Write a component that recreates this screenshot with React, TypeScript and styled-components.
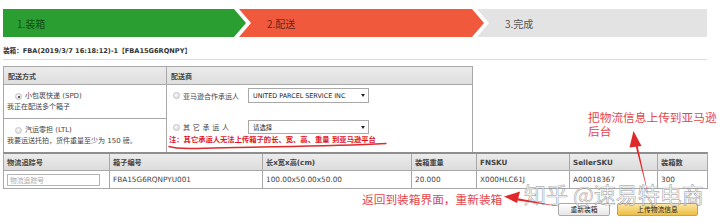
import styled, { createGlobalStyle } from 'styled-components';

const GlobalStyle = createGlobalStyle`
  html, body {
    margin: 0;
    padding: 0;
    background: #fff;
  }
  body {
    font-family: "DejaVu Sans", "Noto Sans CJK SC", sans-serif;
    color: #333;
  }
`;

const Page = styled.div`
  position: relative;
  width: 720px;
  height: 223px;
  overflow: hidden;
  padding: 9px 0 0 3px;
  box-sizing: border-box;
`;

const Steps = styled.div`
  display: flex;
  width: 704px;
  height: 28px;
`;

type StepKind = 'first' | 'middle' | 'last';

const clips: Record<StepKind, string> = {
  first: 'polygon(0 0, calc(100% - 12px) 0, 100% 50%, calc(100% - 12px) 100%, 0 100%)',
  middle:
    'polygon(0 0, calc(100% - 12px) 0, 100% 50%, calc(100% - 12px) 100%, 0 100%, 12px 50%)',
  last: 'polygon(0 0, 100% 0, 100% 100%, 0 100%, 12px 50%)',
};

const Step = styled.div<{ $kind: StepKind; $bg: string; $color: string; $w: number }>`
  flex: none;
  box-sizing: border-box;
  width: ${(p) => p.$w}px;
  margin-left: ${(p) => (p.$kind === 'first' ? 0 : -7)}px;
  padding-left: ${(p) => (p.$kind === 'first' ? 14 : 28)}px;
  display: flex;
  align-items: center;
  background: ${(p) => p.$bg};
  color: ${(p) => p.$color};
  font-family: "Noto Sans CJK SC", sans-serif;
  font-size: 10px;
  clip-path: ${(p) => clips[p.$kind]};
`;

const Title = styled.div`
  width: 704px;
  margin-top: 9px;
  padding-bottom: 3px;
  border-bottom: 1px solid #dcdcdc;
  font-size: 6.6px;
  font-weight: bold;
  line-height: 10px;
  color: #333;
`;

const ShipTable = styled.div`
  display: grid;
  grid-template-columns: 162px 306px;
  grid-template-rows: 17px 34px 34px;
  width: 470px;
  margin-top: 6px;
  border: 1px solid #a8a8a8;
  border-bottom: none;
  box-sizing: border-box;
  font-size: 7px;
`;

const HeadCell = styled.div<{ $divider?: boolean }>`
  display: flex;
  align-items: center;
  padding-left: 4px;
  background: linear-gradient(#ececec, #dedede);
  font-weight: bold;
  color: #444;
  border-left: ${(p) => (p.$divider ? '1px solid #a8a8a8' : 'none')};
`;

const ModeCell = styled.div`
  border-top: 1px solid #a8a8a8;
  padding: 6px 0 0 3px;
  line-height: 11px;
  color: #444;
`;

const CarrierCell = styled.div`
  grid-column: 2;
  grid-row: 2 / span 2;
  border-top: 1px solid #a8a8a8;
  border-left: 1px solid #a8a8a8;
  padding: 3px 0 0 1px;
  display: flex;
  flex-direction: column;
`;

const RadioLine = styled.div<{ $indent?: number }>`
  display: flex;
  align-items: center;
  gap: 3px;
  padding-left: ${(p) => p.$indent ?? 0}px;
  color: #444;
`;

const Radio = styled.span<{ $checked?: boolean }>`
  flex: none;
  position: relative;
  width: 7px;
  height: 7px;
  border-radius: 50%;
  box-sizing: border-box;
  border: 1px solid #c4c4c4;
  background: radial-gradient(circle at 40% 35%, #fafafa, #d6d6d6);
  &::after {
    content: '';
    display: ${(p) => (p.$checked ? 'block' : 'none')};
    position: absolute;
    left: 1.5px;
    top: 1.5px;
    width: 2px;
    height: 2px;
    border-radius: 50%;
    background: #333;
  }
`;

const CarrierRow = styled.div<{ $gapTop: number }>`
  display: grid;
  grid-template-columns: 75px 121px;
  align-items: center;
  margin-top: ${(p) => p.$gapTop}px;
  padding-left: 5px;
`;

const Spaced = styled.span`
  word-spacing: 0.5px;
`;

const Select = styled.div<{ $h: number }>`
  height: ${(p) => p.$h}px;
  box-sizing: border-box;
  border: 1px solid #a9a9a9;
  background: #fff;
  display: flex;
  align-items: center;
  justify-content: space-between;
  padding: 0 3px 0 4px;
  font-size: 6.4px;
  color: #222;
  &::after {
    content: '';
    border-left: 2px solid transparent;
    border-right: 2px solid transparent;
    border-top: 3px solid #222;
  }
`;

const Note = styled.div`
  margin-top: 1px;
  padding-left: 1px;
  color: #e0141e;
  font-weight: bold;
  font-size: 7.3px;
  line-height: 10px;
  white-space: nowrap;
`;

const BoxTable = styled.div`
  display: grid;
  grid-template-columns: 105px 153px 149px 65px 93px 88px 50px;
  grid-template-rows: 16px 18px;
  width: 705px;
  border: 1px solid #a8a8a8;
  border-top: 2px solid #8e8e8e;
  box-sizing: border-box;
`;

const Th = styled.div<{ $first?: boolean }>`
  display: flex;
  align-items: center;
  padding-left: 3px;
  background: linear-gradient(#ececec, #dcdcdc);
  border-left: ${(p) => (p.$first ? 'none' : '1px solid #a8a8a8')};
  font-size: 7.2px;
  font-weight: bold;
  color: #444;
`;

const Td = styled.div<{ $first?: boolean }>`
  display: flex;
  align-items: center;
  padding-left: 3px;
  border-top: 1px solid #a8a8a8;
  border-left: ${(p) => (p.$first ? 'none' : '1px solid #a8a8a8')};
  font-size: 7.3px;
  color: #444;
`;

const TrackInput = styled.input`
  width: 93px;
  height: 12px;
  box-sizing: border-box;
  margin: 0;
  padding: 0 2px;
  border: 1px solid #b4b4b4;
  font-family: "Noto Sans CJK SC", sans-serif;
  font-size: 6.8px;
  outline: none;
  &::placeholder {
    color: #aaa;
  }
`;

const Actions = styled.div`
  display: flex;
  justify-content: flex-end;
  gap: 7px;
  width: 695px;
  margin-top: 14px;
`;

const Button = styled.button<{ $primary?: boolean }>`
  height: 13px;
  width: ${(p) => (p.$primary ? 81 : 52)}px;
  padding: 0;
  border-radius: 2px;
  border: 1px solid ${(p) => (p.$primary ? '#c9a23c' : '#aaa')};
  background: ${(p) =>
    p.$primary ? 'linear-gradient(#fbe6a0, #eebd45)' : 'linear-gradient(#fff, #e6e6e6)'};
  font-family: "Noto Sans CJK SC", sans-serif;
  font-size: 6.8px;
  line-height: 11px;
  color: #222;
`;

const Annotation = styled.div<{ $left: number; $top: number; $width?: number }>`
  position: absolute;
  left: ${(p) => p.$left}px;
  top: ${(p) => p.$top}px;
  width: ${(p) => (p.$width ? `${p.$width}px` : 'auto')};
  font-family: "Noto Sans CJK SC", sans-serif;
  font-size: 11.7px;
  line-height: 14px;
  color: #e2474c;
  white-space: ${(p) => (p.$width ? 'normal' : 'nowrap')};
`;

const Watermark = styled.div`
  position: absolute;
  left: 524px;
  top: 179px;
  font-family: "Noto Sans CJK SC", sans-serif;
  font-size: 22px;
  line-height: 28px;
  color: rgba(255, 255, 255, 0.7);
  -webkit-text-stroke: 0.7px rgba(120, 120, 120, 0.6);
  white-space: nowrap;
`;

const Overlay = styled.svg`
  position: absolute;
  left: 0;
  top: 0;
  pointer-events: none;
`;

const headers = ['物流追踪号', '箱子编号', '长x宽x高(cm)', '装箱重量', 'FNSKU', 'SellerSKU', '装箱数'];
const values = ['FBA15G6RQNPYU001', '100.00x50.00x50.00', '20.000', 'X000HLC61J', 'A00018367', '300'];

export default function App() {
  return (
    <>
      <GlobalStyle />
      <Page>
        <Steps>
          <Step $kind="first" $bg="#2b9e31" $color="rgba(0,0,0,0.55)" $w={243}>
            1.装箱
          </Step>
          <Step $kind="middle" $bg="#f1593c" $color="rgba(0,0,0,0.6)" $w={245}>
            2.配送
          </Step>
          <Step $kind="last" $bg="#e3e3e3" $color="#555" $w={230}>
            3.完成
          </Step>
        </Steps>

        <Title>装箱：FBA(2019/3/7 16:18:12)-1【FBA15G6RQNPY】</Title>

        <ShipTable>
          <HeadCell>配送方式</HeadCell>
          <HeadCell $divider>配送商</HeadCell>
          <ModeCell>
            <RadioLine $indent={8}>
              <Radio $checked />
              小包裹快递 (SPD)
            </RadioLine>
            <div>我正在配送多个箱子</div>
          </ModeCell>
          <CarrierCell>
            <CarrierRow $gapTop={0}>
              <RadioLine>
                <Radio />
                亚马逊合作承运人
              </RadioLine>
              <Select $h={15}>UNITED PARCEL SERVICE INC</Select>
            </CarrierRow>
            <CarrierRow $gapTop={17}>
              <RadioLine>
                <Radio />
                <Spaced>其 它 承 运 人</Spaced>
              </RadioLine>
              <Select $h={14}>请选择</Select>
            </CarrierRow>
            <Note>注：其它承运人无法上传箱子的长、宽、高、重量 到亚马逊平台</Note>
          </CarrierCell>
          <ModeCell>
            <RadioLine $indent={8}>
              <Radio />
              汽运零担 (LTL)
            </RadioLine>
            <div>我要运送托拍，货件重量至少为 150 磅。</div>
          </ModeCell>
        </ShipTable>

        <BoxTable>
          {headers.map((h, i) => (
            <Th key={h} $first={i === 0}>
              {h}
            </Th>
          ))}
          <Td $first>
            <TrackInput placeholder="物流追踪号" />
          </Td>
          {values.map((v) => (
            <Td key={v}>{v}</Td>
          ))}
        </BoxTable>

        <Actions>
          <Button>重新装箱</Button>
          <Button $primary>上传物流信息</Button>
        </Actions>

        <Watermark>知乎 @速易特电商</Watermark>

        <Annotation $left={588} $top={110} $width={134}>
          把物流信息上传到亚马逊后台
        </Annotation>
        <Annotation $left={362} $top={192}>
          返回到装箱界面，重新装箱
        </Annotation>

        <Overlay width={720} height={223} viewBox="0 0 720 223">
          <path
            d="M169 146.5 C 178 149.5, 200 148.5, 235 147.5 S 330 146.5, 386 143.5"
            fill="none"
            stroke="#e02a2a"
            strokeWidth={1.4}
            strokeLinecap="round"
          />
          <path d="M560 206.5 L518 198.2 L517.4 200.6 Z" fill="#e0282a" />
          <path d="M504 196.5 L520 191.5 L517 203 Z" fill="#e0282a" />
          <path d="M649 198 L637.2 144 L635.2 144.5 Z" fill="#e0282a" />
          <path d="M633.5 131 L641.5 146 L629.5 147.5 Z" fill="#e0282a" />
        </Overlay>
      </Page>
    </>
  );
}
